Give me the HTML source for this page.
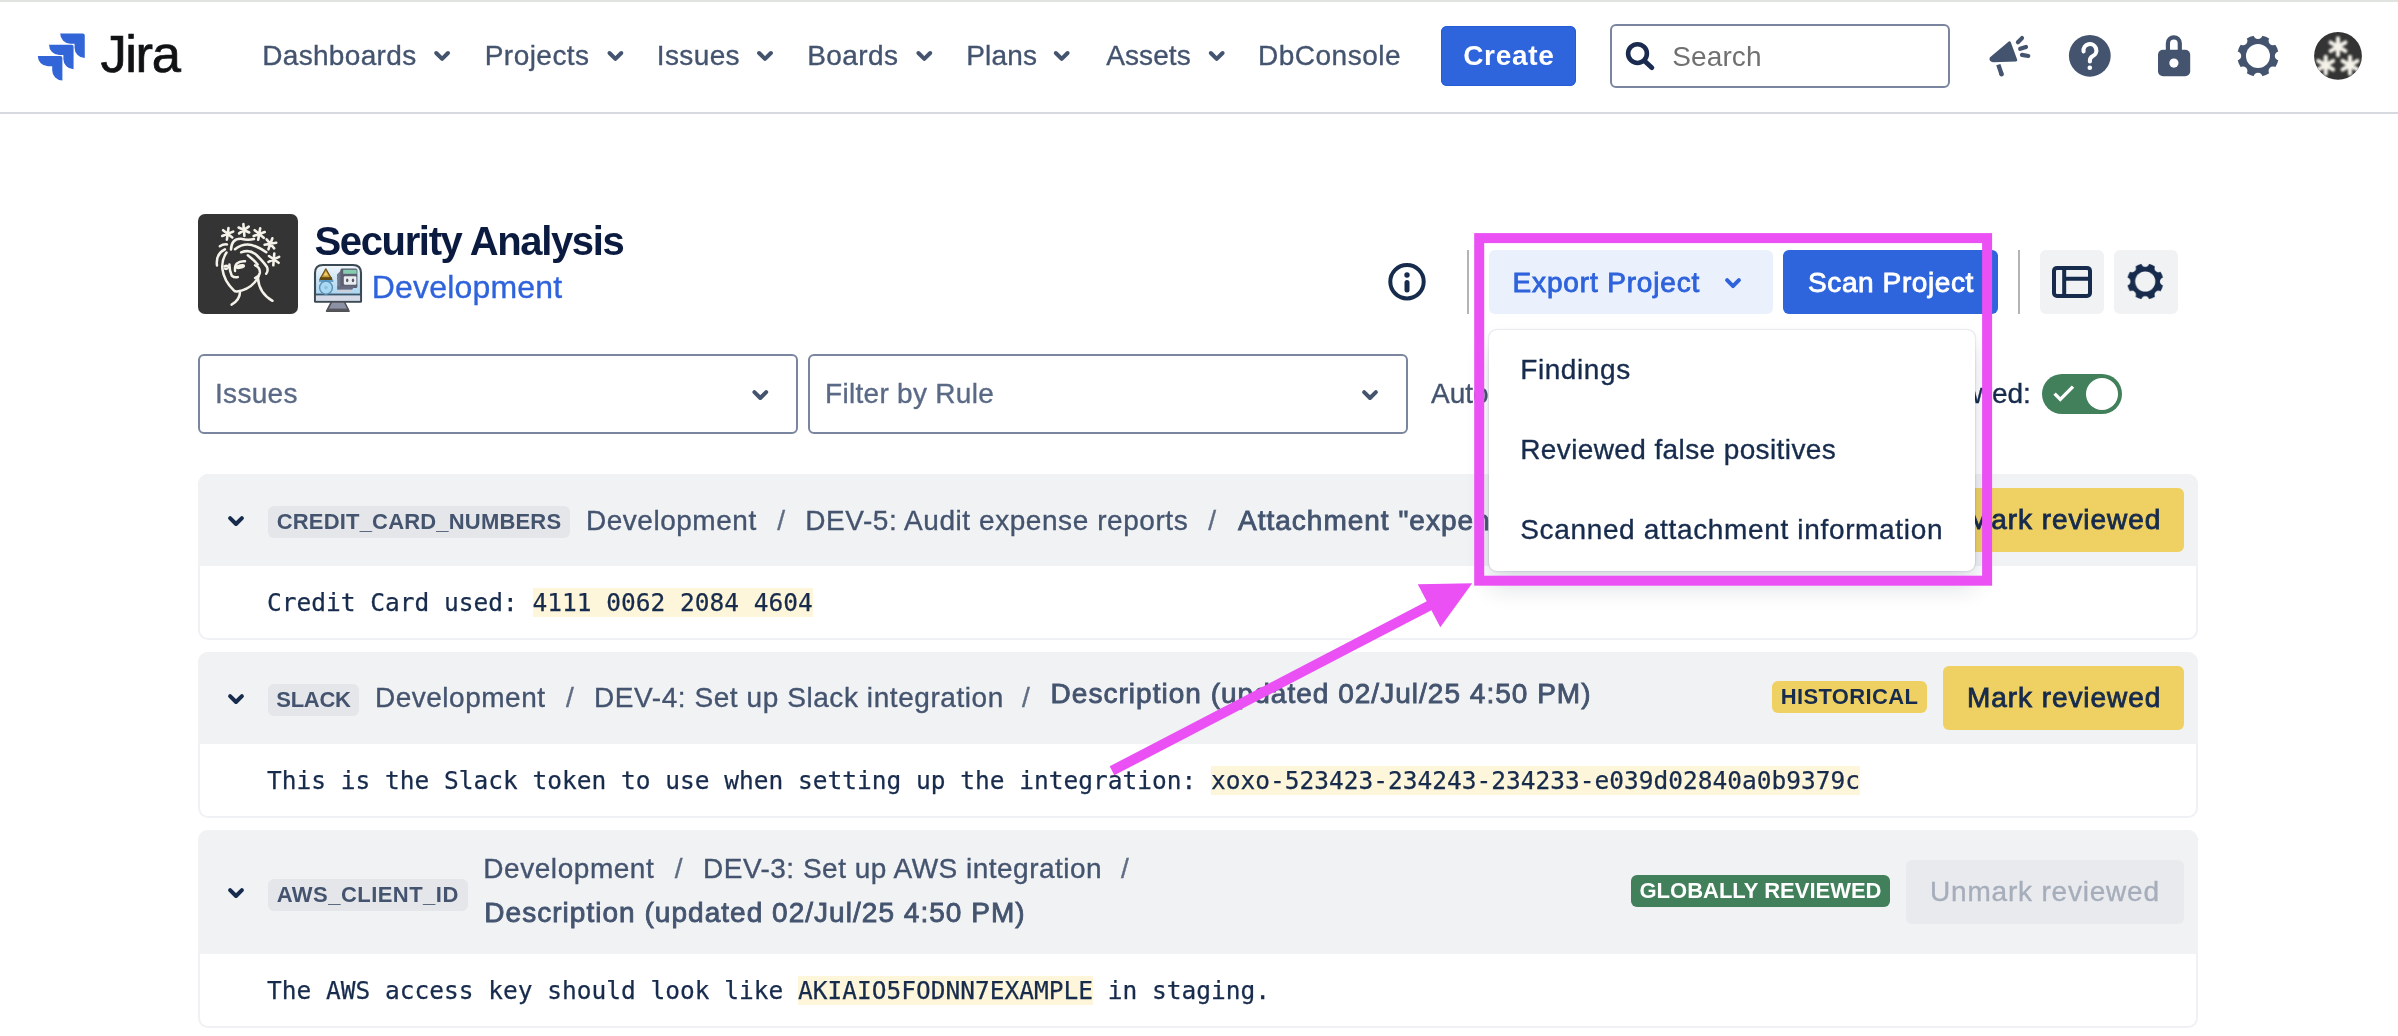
<!DOCTYPE html>
<html lang="en">
<head>
<meta charset="utf-8">
<title>Security Analysis - Jira</title>
<style>
*{box-sizing:border-box;margin:0;padding:0}
html,body{width:2398px;height:1036px;overflow:hidden;background:#fff}
#page{position:absolute;left:0;top:0;width:2398px;height:1036px;will-change:transform}
body{font-family:"Liberation Sans",Arial,sans-serif;color:#172B4D;position:relative}
.t{position:absolute;white-space:nowrap;font-size:28px;line-height:36px;-webkit-text-stroke:.35px currentColor}
.med{-webkit-text-stroke:.85px currentColor}
/* top nav */
#topline{position:absolute;left:0;top:0;width:2398px;height:2px;background:#E1E3E0}
#navline{position:absolute;left:0;top:112px;width:2398px;height:2px;background:#D6DAE0}
.nav{color:#44546F;top:37.5px}
#jira{position:absolute;left:100.5px;top:24px;font-size:52.5px;line-height:60px;color:#101214;letter-spacing:-1.4px;-webkit-text-stroke:.7px #101214;white-space:nowrap}
#create{position:absolute;left:1441px;top:26px;width:135px;height:60px;border-radius:6px;background:#2E64DC;box-shadow:inset 0 0 0 1px #245CD8;color:#fff;font-weight:bold;font-size:28px;line-height:60px;text-align:center;letter-spacing:.7px;text-indent:.7px}
#search{position:absolute;left:1610px;top:24px;width:340px;height:64px;border:2px solid #7A86A0;border-radius:6px;background:#fff}
#search span{position:absolute;left:60.3px;top:13px;font-size:28px;letter-spacing:.1px;line-height:36px;color:#707070}
/* header */
#appicon{position:absolute;left:198px;top:214px;width:100px;height:100px;border-radius:7px;background:#343434}
#title{-webkit-text-stroke:0;left:314.5px;top:216px;font-size:40px;line-height:50px;font-weight:bold;color:#0B1B40;letter-spacing:-1.36px}
#devlink{left:371.7px;top:267px;font-size:32px;line-height:40px;color:#2F63DB;letter-spacing:.2px}
.vdiv{position:absolute;top:250px;width:2px;height:64px;background:#B4B4B4}
.btn{position:absolute;top:250px;height:64px;border-radius:6px;font-size:28px;line-height:64px;white-space:nowrap}
#export{left:1489px;width:284px;background:#EAF1FD;color:#2F63DB}
#export span{position:absolute;top:.7px;left:23.5px;letter-spacing:.85px}
#scan{left:1783px;width:215px;background:#2E64DC;color:#fff}
#scan span{position:absolute;top:.7px;left:25px;letter-spacing:.6px}
.ibtn{position:absolute;top:250px;width:64px;height:64px;border-radius:6px;background:#F1F2F4}
/* selects */
.sel{position:absolute;top:354px;width:600px;height:80px;border:2px solid #7A86A0;border-radius:6px;background:#fff}
.sel span{-webkit-text-stroke:.35px currentColor;position:absolute;left:15px;top:20px;font-size:28px;line-height:36px;color:#5A6A86;white-space:nowrap;letter-spacing:.3px}
#toggle{position:absolute;left:2042px;top:374px;width:80px;height:40px;border-radius:20px;background:#41805B}
#toggle i{position:absolute;left:44px;top:4px;width:32px;height:32px;border-radius:16px;background:#fff}
/* cards */
.card{position:absolute;left:198px;width:2000px;border-radius:10px;background:#fff;overflow:hidden;box-shadow:inset 0 0 0 2px #F0F1F4}
.chead{position:absolute;left:0;top:0;width:100%;background:#F1F2F4}
.loz{position:absolute;left:70px;height:32px;background:#E5E6EA;color:#44546F;font-weight:bold;font-size:22px;line-height:32px;border-radius:6px;white-space:nowrap;text-align:center}
.cr{color:#44546F}
.sl{color:#5E6C84}
.mono{position:absolute;left:69px;font-family:"DejaVu Sans Mono","Liberation Mono",monospace;font-size:24.5px;line-height:36px;color:#172B4D;white-space:pre;-webkit-text-stroke:.25px #172B4D}
.mono mark{background:#FEF6DB;color:inherit}
.mk{position:absolute;height:64px;border-radius:6px;font-size:28px;line-height:64px;white-space:nowrap}
.mk span{position:absolute;left:24px;-webkit-text-stroke:.35px currentColor}
.mk span.med{-webkit-text-stroke:.85px currentColor}
.mk.y{background:#EFD062;color:#172B4D}
.mk.d{background:#E9EAEE;color:#A6AEBB}
.tag{position:absolute;height:32px;border-radius:6px;font-weight:bold;font-size:22px;line-height:32px;white-space:nowrap;text-align:center}
/* dropdown */
#menu{position:absolute;left:1489px;top:330px;width:486px;height:241px;background:#fff;border-radius:8px;box-shadow:0 0 2px rgba(9,30,66,.31),0 16px 24px rgba(9,30,66,.15);z-index:2}
#menu div{-webkit-text-stroke:.35px currentColor;position:absolute;left:31.2px;font-size:28px;line-height:36px;color:#172B4D;white-space:nowrap}
svg.ov{position:absolute;left:0;top:0;width:2398px;height:1036px;pointer-events:none}
#icons{z-index:1}
#anno{z-index:3}
</style>
</head>
<body>
<div id="page">
<div id="topline"></div>
<div id="navline"></div>
<span id="jira">Jira</span>
<span class="t nav" style="left:262.2px;letter-spacing:.33px">Dashboards</span>
<span class="t nav" style="left:484.7px;letter-spacing:.47px">Projects</span>
<span class="t nav" style="left:656.8px;letter-spacing:.38px">Issues</span>
<span class="t nav" style="left:807.3px;letter-spacing:.4px">Boards</span>
<span class="t nav" style="left:966.2px;letter-spacing:.2px">Plans</span>
<span class="t nav" style="left:1106.2px;letter-spacing:.1px">Assets</span>
<span class="t nav" style="left:1258px;letter-spacing:.5px">DbConsole</span>
<div id="create">Create</div>
<div id="search"><span>Search</span></div>

<div id="appicon"></div>
<div class="t" id="title">Security Analysis</div>
<div class="t" id="devlink">Development</div>
<div class="vdiv" style="left:1467px"></div>
<div class="btn" id="export"><span class="med">Export Project</span></div>
<div class="btn" id="scan"><span class="med">Scan Project</span></div>
<div class="vdiv" style="left:2018px"></div>
<div class="ibtn" style="left:2040px"></div>
<div class="ibtn" style="left:2114px"></div>

<div class="sel" style="left:198px"><span>Issues</span></div>
<div class="sel" style="left:808px"><span>Filter by Rule</span></div>
<div class="t cr" style="left:1431px;top:376px">Auto-review:</div>
<div class="t" style="right:367.2px;top:376px">Show reviewed:</div>
<div id="toggle"><i></i></div>

<div class="card" style="top:474px;height:166px">
  <div class="chead" style="height:92px"></div>
  <span class="loz" style="top:32px;width:302px;letter-spacing:.18px">CREDIT_CARD_NUMBERS</span>
  <span class="t cr" style="left:388px;top:28.5px;letter-spacing:.52px">Development</span>
  <span class="t sl" style="left:579.3px;top:28.5px">/</span>
  <span class="t cr" style="left:607.2px;top:28.5px;letter-spacing:.56px">DEV-5: Audit expense reports</span>
  <span class="t sl" style="left:1010.3px;top:28.5px">/</span>
  <span class="t cr med" style="left:1040px;top:28.5px;letter-spacing:1px">Attachment "expenses.txt"</span>
  <div class="mk y" style="left:1745px;top:14px;width:241px"><span class="med" style="letter-spacing:.93px">Mark reviewed</span></div>
  <div class="mono" style="top:111px">Credit Card used: <mark>4111 0062 2084 4604</mark></div>
</div>

<div class="card" style="top:652px;height:166px">
  <div class="chead" style="height:92px"></div>
  <span class="loz" style="top:32px;width:91px;letter-spacing:-.3px">SLACK</span>
  <span class="t cr" style="left:177px;top:28px;letter-spacing:.5px">Development</span>
  <span class="t sl" style="left:368px;top:28px">/</span>
  <span class="t cr" style="left:396px;top:28px;letter-spacing:.57px">DEV-4: Set up Slack integration</span>
  <span class="t sl" style="left:824px;top:28px">/</span>
  <span class="t cr med" style="left:852.6px;top:24px;letter-spacing:1.02px">Description (updated 02/Jul/25 4:50 PM)</span>
  <span class="tag" style="left:1574px;top:29px;width:155px;background:#EFD062;color:#172B4D;letter-spacing:.33px">HISTORICAL</span>
  <div class="mk y" style="left:1745px;top:14px;width:241px"><span class="med" style="letter-spacing:.93px">Mark reviewed</span></div>
  <div class="mono" style="top:111px">This is the Slack token to use when setting up the integration: <mark>xoxo-523423-234243-234233-e039d02840a0b9379c</mark></div>
</div>

<div class="card" style="top:830px;height:198px">
  <div class="chead" style="height:124px"></div>
  <span class="loz" style="top:48.5px;width:199.5px;letter-spacing:.46px">AWS_CLIENT_ID</span>
  <span class="t cr" style="left:285.3px;top:21px;letter-spacing:.55px">Development</span>
  <span class="t sl" style="left:476.7px;top:21px">/</span>
  <span class="t cr" style="left:505px;top:21px;letter-spacing:.49px">DEV-3: Set up AWS integration</span>
  <span class="t sl" style="left:923px;top:21px">/</span>
  <span class="t cr med" style="left:286.3px;top:64.5px;letter-spacing:1.03px">Description (updated 02/Jul/25 4:50 PM)</span>
  <span class="tag" style="left:1433px;top:45px;width:259px;background:#41805B;color:#fff">GLOBALLY REVIEWED</span>
  <div class="mk d" style="left:1708px;top:30px;width:278px"><span style="letter-spacing:.8px">Unmark reviewed</span></div>
  <div class="mono" style="top:143px">The AWS access key should look like <mark>AKIAIO5FODNN7EXAMPLE</mark> in staging.</div>
</div>

<svg class="ov" id="icons" viewBox="0 0 2398 1036">
<defs><filter id="blur2" x="-10%" y="-10%" width="120%" height="120%"><feGaussianBlur stdDeviation="0.45"/></filter><filter id="blur1" x="-20%" y="-20%" width="140%" height="140%"><feGaussianBlur stdDeviation="0.9"/></filter></defs>
<path transform="translate(37.8 33.6) scale(1.955)" fill="#3265D7" d="M11.571 11.513H0a5.218 5.218 0 0 0 5.232 5.215h2.13v2.057A5.215 5.215 0 0 0 12.575 24V12.518a1.005 1.005 0 0 0-1.005-1.005zm5.723-5.756H5.736a5.215 5.215 0 0 0 5.215 5.214h2.129v2.058a5.218 5.218 0 0 0 5.215 5.214V6.758a1.001 1.001 0 0 0-1.001-1.001zM23.013 0H11.455a5.215 5.215 0 0 0 5.215 5.215h2.129v2.057A5.215 5.215 0 0 0 24.019 12.483V1.005A1.001 1.001 0 0 0 23.013 0z"/>
<path d="M436.2 53.0L442.1 58.9L448.0 53.0" fill="none" stroke="#44546F" stroke-width="4" stroke-linecap="round" stroke-linejoin="round"/>
<path d="M609.5 53.0L615.4 58.9L621.3 53.0" fill="none" stroke="#44546F" stroke-width="4" stroke-linecap="round" stroke-linejoin="round"/>
<path d="M759.1 53.0L765.0 58.9L770.9 53.0" fill="none" stroke="#44546F" stroke-width="4" stroke-linecap="round" stroke-linejoin="round"/>
<path d="M918.4 53.0L924.3 58.9L930.2 53.0" fill="none" stroke="#44546F" stroke-width="4" stroke-linecap="round" stroke-linejoin="round"/>
<path d="M1055.8 53.0L1061.7 58.9L1067.6 53.0" fill="none" stroke="#44546F" stroke-width="4" stroke-linecap="round" stroke-linejoin="round"/>
<path d="M1210.8 53.0L1216.7 58.9L1222.6 53.0" fill="none" stroke="#44546F" stroke-width="4" stroke-linecap="round" stroke-linejoin="round"/>
<circle cx="1637.5" cy="53.6" r="9.4" fill="none" stroke="#1B2B4F" stroke-width="4.6"/><path d="M1644.6 60.9L1651.9 67.7" stroke="#1B2B4F" stroke-width="4.8" stroke-linecap="round"/>
<path d="M2009.6 42.6L2016 60.1L1993.4 60.9Q1990.2 60.6 1990.9 58.3Z" fill="#44546F" stroke="#44546F" stroke-width="2.6" stroke-linejoin="round"/><path d="M1998.3 64.6L2001.6 74.2" stroke="#44546F" stroke-width="4.4"/><circle cx="2001.6" cy="74.2" r="2.2" fill="#44546F"/><path d="M2017.9 42.3L2022 38.1M2020.2 48.8L2026 46.9M2022 54.9L2028.3 56" stroke="#44546F" stroke-width="4.2" stroke-linecap="round"/>
<circle cx="2089.8" cy="55.8" r="20.9" fill="#44546F"/><path d="M2083.6 51.4A6.4 6.4 0 1 1 2092.6 56.2Q2089.9 57.6 2089.9 60.2V61.4" fill="none" stroke="#fff" stroke-width="4.1" stroke-linecap="round"/><circle cx="2089.8" cy="67.7" r="2.3" fill="#fff"/>
<rect x="2158" y="49.8" width="32.2" height="26.4" rx="5" fill="#44546F"/><path d="M2167.9 51V43.3A5.95 5.95 0 0 1 2179.8 43.3V51" fill="none" stroke="#44546F" stroke-width="4.2"/><circle cx="2173.9" cy="63.1" r="4.6" fill="#fff"/>
<g transform="translate(2258 55.9) scale(1)"><mask id="gm1" maskUnits="userSpaceOnUse" x="-24" y="-24" width="48" height="48"><rect x="-24" y="-24" width="48" height="48" fill="#fff"/><circle r="12" fill="#000"/><circle cx="0.00" cy="-21.30" r="4.5" fill="#000"/><circle cx="15.06" cy="-15.06" r="4.5" fill="#000"/><circle cx="21.30" cy="-0.00" r="4.5" fill="#000"/><circle cx="15.06" cy="15.06" r="4.5" fill="#000"/><circle cx="0.00" cy="21.30" r="4.5" fill="#000"/><circle cx="-15.06" cy="15.06" r="4.5" fill="#000"/><circle cx="-21.30" cy="0.00" r="4.5" fill="#000"/><circle cx="-15.06" cy="-15.06" r="4.5" fill="#000"/></mask><circle r="20.7" fill="#44546F" mask="url(#gm1)"/></g>
<circle cx="2338" cy="55.9" r="23.9" fill="#343434"/><clipPath id="avc"><circle cx="2338" cy="55.9" r="23.9"/></clipPath><g clip-path="url(#avc)"><g filter="url(#blur1)"><path d="M2338.0 55.3L2338.0 38.3M2330.6 51.0L2345.4 42.5M2330.6 42.5L2345.4 51.0" stroke="#F4F2E9" stroke-width="4.1" stroke-linecap="round" fill="none"/><path d="M2325.7 73.7L2325.7 56.7M2318.3 69.5L2333.1 61.0M2318.3 61.0L2333.1 69.5" stroke="#F4F2E9" stroke-width="4.1" stroke-linecap="round" fill="none"/><path d="M2350.0 73.7L2350.0 56.7M2342.6 69.5L2357.4 61.0M2342.6 61.0L2357.4 69.5" stroke="#F4F2E9" stroke-width="4.1" stroke-linecap="round" fill="none"/></g></g>
<circle cx="1407" cy="281.7" r="16.7" fill="none" stroke="#172B4D" stroke-width="4"/><circle cx="1407" cy="275" r="2.7" fill="#172B4D"/><path d="M1407 282.6V290" stroke="#172B4D" stroke-width="5" stroke-linecap="round"/>
<path d="M1727.1 280.2L1733.0 286.1L1738.9 280.2" fill="none" stroke="#2F63DB" stroke-width="4" stroke-linecap="round" stroke-linejoin="round"/>
<rect x="2054" y="267.9" width="36" height="28" rx="3" fill="none" stroke="#172B4D" stroke-width="4"/><path d="M2064.2 268V296M2064.2 278.7H2090" stroke="#172B4D" stroke-width="4" fill="none"/>
<g transform="translate(2145.2 281.5) scale(0.875)"><mask id="gm2" maskUnits="userSpaceOnUse" x="-24" y="-24" width="48" height="48"><rect x="-24" y="-24" width="48" height="48" fill="#fff"/><circle r="11.5" fill="#000"/><circle cx="0.00" cy="-21.30" r="4.5" fill="#000"/><circle cx="15.06" cy="-15.06" r="4.5" fill="#000"/><circle cx="21.30" cy="-0.00" r="4.5" fill="#000"/><circle cx="15.06" cy="15.06" r="4.5" fill="#000"/><circle cx="0.00" cy="21.30" r="4.5" fill="#000"/><circle cx="-15.06" cy="15.06" r="4.5" fill="#000"/><circle cx="-21.30" cy="0.00" r="4.5" fill="#000"/><circle cx="-15.06" cy="-15.06" r="4.5" fill="#000"/></mask><circle r="20.7" fill="#172B4D" mask="url(#gm2)"/></g>
<path d="M754.4 392.1L760.3 398.0L766.2 392.1" fill="none" stroke="#44546F" stroke-width="4" stroke-linecap="round" stroke-linejoin="round"/>
<path d="M1364.1 392.1L1370.0 398.0L1375.9 392.1" fill="none" stroke="#44546F" stroke-width="4" stroke-linecap="round" stroke-linejoin="round"/>
<path d="M2054.6 393.6L2060.3 399.4L2073 386.6" fill="none" stroke="#fff" stroke-width="3.4"/>
<path d="M230.1 518.1L236.0 524.0L241.9 518.1" fill="none" stroke="#172B4D" stroke-width="4" stroke-linecap="round" stroke-linejoin="round"/>
<path d="M230.1 696.1L236.0 702.0L241.9 696.1" fill="none" stroke="#172B4D" stroke-width="4" stroke-linecap="round" stroke-linejoin="round"/>
<path d="M230.1 890.1L236.0 896.0L241.9 890.1" fill="none" stroke="#172B4D" stroke-width="4" stroke-linecap="round" stroke-linejoin="round"/>
<g transform="translate(198 214)"><path d="M28.9 25.6L30.5 14.0M24.2 22.0L35.2 17.6M25.1 16.2L34.3 23.4" stroke="#F4F2E9" stroke-width="2.6" stroke-linecap="round" fill="none"/><path d="M46.4 21.9L45.4 10.1M41.1 19.4L50.7 12.6M40.6 13.5L51.2 18.5" stroke="#F4F2E9" stroke-width="2.6" stroke-linecap="round" fill="none"/><path d="M60.2 25.8L62.2 14.2M55.7 22.0L66.7 18.0M56.7 16.2L65.7 23.8" stroke="#F4F2E9" stroke-width="2.6" stroke-linecap="round" fill="none"/><path d="M70.4 35.3L74.4 24.3M66.6 30.8L78.2 28.8M68.6 25.3L76.2 34.3" stroke="#F4F2E9" stroke-width="2.6" stroke-linecap="round" fill="none"/><path d="M75.3 51.3L76.3 39.5M70.5 47.9L81.1 42.9M71.0 42.0L80.6 48.8" stroke="#F4F2E9" stroke-width="2.6" stroke-linecap="round" fill="none"/><path d="M21.8 32.3Q25 30 29 30.4" stroke="#F4F2E9" fill="none" stroke-linecap="round" stroke-linejoin="round" stroke-width="2.5"/><path d="M33 35.5Q33.5 24.5 43 24.8Q50 26.5 56 25" stroke="#F4F2E9" fill="none" stroke-linecap="round" stroke-linejoin="round" stroke-width="2.5"/><path d="M37 35.3Q47 27.5 58 32.5Q64 35 68.3 38.3" stroke="#F4F2E9" fill="none" stroke-linecap="round" stroke-linejoin="round" stroke-width="2.5"/><path d="M43.1 38.3Q52 35 58.5 41Q66 48.5 69 53Q70.5 57 68.2 59.8" stroke="#F4F2E9" fill="none" stroke-linecap="round" stroke-linejoin="round" stroke-width="2.5"/><path d="M49.8 41.2Q56 46 59.6 50.6" stroke="#F4F2E9" fill="none" stroke-linecap="round" stroke-linejoin="round" stroke-width="2.5"/><path d="M19 51.5Q17.5 40 26.9 35.3" stroke="#F4F2E9" fill="none" stroke-linecap="round" stroke-linejoin="round" stroke-width="2.5"/><path d="M28.5 38.5Q23.5 46 24.4 55Q26 67 35.8 76.3Q37 77.6 39 77.4Q50 76 56.5 68.5Q59.5 65 60.6 62.6" stroke="#F4F2E9" fill="none" stroke-linecap="round" stroke-linejoin="round" stroke-width="2.5"/><path d="M57.1 51.3Q62.5 53.5 61.8 59Q61 63 57.1 63.9" stroke="#F4F2E9" fill="none" stroke-linecap="round" stroke-linejoin="round" stroke-width="2.5"/><path d="M37 57Q36 46.5 47 47.2" stroke="#F4F2E9" fill="none" stroke-linecap="round" stroke-linejoin="round" stroke-width="2.5"/><path d="M26.5 52.4Q29 51 31 53.5" stroke="#F4F2E9" fill="none" stroke-linecap="round" stroke-linejoin="round" stroke-width="2.5"/><path d="M31.4 50.4Q31.5 57 33.8 61.8Q36.5 64 39.8 63.1" stroke="#F4F2E9" fill="none" stroke-linecap="round" stroke-linejoin="round" stroke-width="2.5"/><path d="M42 77.8Q42 86 33.6 90.6" stroke="#F4F2E9" fill="none" stroke-linecap="round" stroke-linejoin="round" stroke-width="2.5"/><path d="M59.9 63.8Q61 79 74.5 86.8" stroke="#F4F2E9" fill="none" stroke-linecap="round" stroke-linejoin="round" stroke-width="2.5"/><ellipse cx="42.3" cy="52.6" rx="4.9" ry="2.3" transform="rotate(-14 42.3 52.6)" fill="#F4F2E9"/><ellipse cx="28" cy="54.8" rx="2.2" ry="1.4" fill="#F4F2E9"/></g>
<g transform="translate(314 264)" filter="url(#blur2)"><defs><linearGradient id="scr" x1="0" y1="0" x2="0" y2="1"><stop offset="0" stop-color="#F3F6FA"/><stop offset=".35" stop-color="#CFE6F6"/><stop offset="1" stop-color="#9BCFEE"/></linearGradient></defs><path d="M1 37.6V9Q1 1 9 1H39Q47 1 47 9V37.6Z" fill="url(#scr)" stroke="#3B4853" stroke-width="2.1" stroke-linejoin="round"/><rect x="1.6" y="29.6" width="44.8" height="2" fill="#3D566A"/><rect x="1.9" y="31.6" width="44.2" height="5.2" fill="#D6DAE6"/><path d="M17.5 38H30.5L35 47.2H12.6Z" fill="#8C91A6" stroke="#4F5054" stroke-width="1.6" stroke-linejoin="round"/><rect x="13" y="44.6" width="22" height="2.6" fill="#55575C"/><path d="M11.8 4.8L18 15.6H5.8Z" fill="#C99A33" stroke="#6E5418" stroke-width="1.2" stroke-linejoin="round"/><path d="M11.8 7.5L14.2 11.5H9.4Z" fill="#F0CC6A"/><rect x="6" y="13.2" width="12" height="2.6" fill="#5E4A17"/><ellipse cx="12" cy="23.6" rx="6.4" ry="6.6" fill="#A9D8F3" stroke="#5E8FB2" stroke-width="1.4"/><rect x="5" y="16.2" width="14.4" height="1.6" fill="#4F93C4"/><circle cx="12" cy="23.6" r="1.8" fill="#8FC0E0"/><path d="M23 10.5L27 6.5V25.6H23.4Z" fill="#70758A"/><rect x="26.4" y="4.4" width="17" height="19.6" rx="1.6" fill="#5B6073"/><rect x="29.2" y="5.8" width="13.4" height="4" fill="#86CDB0"/><rect x="29.8" y="12.2" width="12.6" height="8.6" rx="1.4" fill="#ECEDF1"/><ellipse cx="33.2" cy="16.4" rx="1.2" ry="1.8" fill="#555A6B"/><ellipse cx="39" cy="16.4" rx="1.2" ry="1.8" fill="#555A6B"/><path d="M23.4 22H41L38 25.8H23.4Z" fill="#666B80"/><rect x="24" y="25.8" width="13.6" height="2.4" fill="#CDD0DA"/></g>
</svg>

<div id="menu">
  <div style="top:22px;letter-spacing:.59px">Findings</div>
  <div style="top:102px;letter-spacing:.39px">Reviewed false positives</div>
  <div style="top:182px;letter-spacing:.66px">Scanned attachment information</div>
</div>

<svg class="ov" id="anno" viewBox="0 0 2398 1036">
  <defs><filter id="ash" x="-5%" y="-5%" width="110%" height="120%"><feDropShadow dx="0" dy="8" stdDeviation="9" flood-color="#091E42" flood-opacity=".16"/></filter></defs>
  <g>
  <rect x="1479.2" y="238.1" width="507.9" height="342.6" fill="none" stroke="#EA50F4" stroke-width="10"/>
  <line x1="1112" y1="770.8" x2="1432" y2="604.2" stroke="#EA50F4" stroke-width="10"/>
  <polygon points="1472.2,583.2 1417.8,584.3 1440.3,627.2" fill="#EA50F4"/>
  </g>
</svg>
</div>
</body>
</html>
